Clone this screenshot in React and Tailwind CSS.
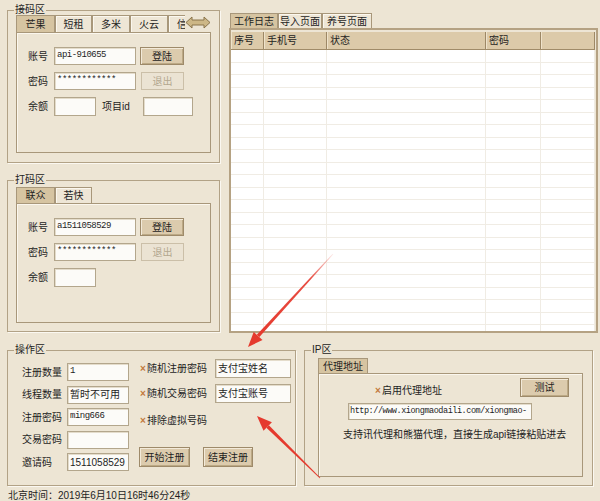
import React from 'react';

const GroupBox = ({ title, className = '', children }) => (
  <fieldset className={`border border-[#b2a286] shadow-[1px_1px_0_#fbf8f1] ${className}`}>
    <legend className="ml-[6px] px-px h-[12px] leading-[12px] text-[10px] text-[#222]">{title}</legend>
    {children}
  </fieldset>
);

const Tab = ({ label, active, className = '' }) => (
  <div
    className={`flex items-center justify-center shrink-0 h-full border border-b-0 border-[#a8977a] whitespace-nowrap ${
      active ? 'bg-[#d6c4a1]' : 'bg-[#eee6d6] shadow-[inset_1px_1px_0_#fbf7ee]'
    } ${className}`}
  >
    {label}
  </div>
);

const TextBox = ({ value = '', mono, className = '' }) => (
  <div
    className={`flex items-center px-[2px] bg-[#fcfbf8] border border-[#b3a68c] shadow-[inset_1px_1px_0_#e4dccb] overflow-hidden whitespace-nowrap ${
      mono ? "font-['Liberation_Mono',monospace] text-[9px] tracking-[-0.5px]" : ''
    } ${className}`}
  >
    {value}
  </div>
);

const Btn = ({ label, disabled, className = '' }) => (
  <button
    type="button"
    className={`flex items-center justify-center border text-[10px] ${
      disabled
        ? 'bg-[#ebe3d3] border-[#cbbfa8] text-[#b3a78f]'
        : 'bg-[#dccbad] border-[#9e8a6a] shadow-[inset_1px_1px_0_#f3ead9,inset_-1px_-1px_0_#bca985]'
    } ${className}`}
  >
    {label}
  </button>
);

const Check = ({ label, className = '' }) => (
  <div className={`flex items-center whitespace-nowrap leading-[12px] ${className}`}>
    <span className="w-[7px] text-[#c27a3c] font-bold">×</span>
    <span>{label}</span>
  </div>
);

const ScrollArrows = () => (
  <svg width="26" height="13" viewBox="0 0 26 13" className="shrink-0 mb-[3px]">
    <path d="M1 6.5 L7 1 L7 4 L19 4 L19 1 L25 6.5 L19 12 L19 9 L7 9 L7 12 Z" fill="#cdb786" stroke="#8a744b" strokeWidth="1" />
  </svg>
);

// 账号 / 密码 / 余额 rows shared by both platform panels
const LoginRows = ({ account, extra }) => (
  <div className="flex flex-col gap-[7px]">
    <div className="flex items-center h-[18px]">
      <span className="w-[26px]">账号</span>
      <TextBox value={account} mono className="w-[82px] h-full" />
      <Btn label="登陆" className="ml-[4px] w-[44px] h-full" />
    </div>
    <div className="flex items-center h-[18px]">
      <span className="w-[26px]">密码</span>
      <TextBox value="************" mono className="w-[82px] h-full" />
      <Btn label="退出" disabled className="ml-[5px] w-[43px] h-full" />
    </div>
    <div className="flex items-center h-[19px]">
      <span className="w-[26px]">余额</span>
      <TextBox className="w-[42px] h-full" />
      {extra && (
        <>
          <span className="ml-[6px] w-[41px]">项目id</span>
          <TextBox className="w-[50px] h-full" />
        </>
      )}
    </div>
  </div>
);

const columns = [
  { label: '序号', w: 'w-[33px]' },
  { label: '手机号', w: 'w-[63px]' },
  { label: '状态', w: 'w-[159px]' },
  { label: '密码', w: 'w-[55px]' },
  { label: '', w: 'flex-1' },
];

const rows = Array.from({ length: 23 }, (_, i) => i);

export default function App() {
  return (
    <div className="relative w-[600px] h-[501px] overflow-hidden bg-[#ede5d4] text-[10px] text-[#1e1e1e] font-['Liberation_Sans','Noto_Sans_CJK_SC',sans-serif]">
      {/* top area */}
      <div className="flex h-[333px] pt-[4px]">
        <div className="ml-[7px] w-[213px] flex flex-col">
          <GroupBox title="接码区" className="h-[159px]">
            <div className="ml-[8px] -mt-px w-[195px]">
              <div className="flex items-end h-[17px]">
                <div className="flex h-full w-[169px] overflow-hidden">
                  <Tab label="芒果" active className="w-[39px]" />
                  <Tab label="短租" className="w-[37px]" />
                  <Tab label="多米" className="w-[38px]" />
                  <Tab label="火云" className="w-[38px]" />
                  <Tab label="信息" className="w-[38px]" />
                </div>
                <ScrollArrows />
              </div>
              <div className="h-[121px] border border-[#a8977a] shadow-[inset_1px_1px_0_#fbf7ee] pt-[14px] pl-[11px]">
                <LoginRows account="api-910655" extra />
              </div>
            </div>
          </GroupBox>

          <GroupBox title="打码区" className="mt-[11px] h-[158px]">
            <div className="ml-[8px] mt-px w-[195px]">
              <div className="flex h-[16px]">
                <Tab label="联众" active className="w-[39px]" />
                <Tab label="若快" className="w-[37px]" />
              </div>
              <div className="h-[120px] border border-[#a8977a] shadow-[inset_1px_1px_0_#fbf7ee] pt-[14px] pl-[11px]">
                <LoginRows account="a1511058529" />
              </div>
            </div>
          </GroupBox>
        </div>

        {/* log tabs */}
        <div className="ml-[9px] mt-[9px] w-[369px] flex flex-col">
          <div className="flex h-[15px] ml-px">
            <Tab label="工作日志" active className="w-[48px]" />
            <Tab label="导入页面" className="w-[44px]" />
            <Tab label="养号页面" className="w-[50px]" />
          </div>
          <div className="h-[305px] border-2 border-[#b5a283] pt-[2px] pr-px flex flex-col overflow-hidden">
            <div className="flex h-[18px] bg-[#dccaa9] border-b border-[#a08b68] shrink-0">
              {columns.map((c) => (
                <div
                  key={c.label || 'blank'}
                  className={`${c.w} h-full flex items-center pl-[3px] border-r border-[#9d8866] shadow-[inset_1px_0_0_#efe3cb]`}
                >
                  {c.label}
                </div>
              ))}
            </div>
            <div className="flex-1 bg-white overflow-hidden">
              {rows.map((r) => (
                <div key={r} className="flex h-[12.5px]">
                  {columns.map((c) => (
                    <div key={c.label || 'blank'} className={`${c.w} h-full border-r border-b border-[#f0ece4]`} />
                  ))}
                </div>
              ))}
            </div>
          </div>
        </div>
      </div>

      {/* bottom area */}
      <div className="flex mt-[11px]">
        <GroupBox title="操作区" className="ml-[7px] w-[289px] h-[142px]">
          <div className="flex">
            <div className="pl-[14px] pt-[7px] flex flex-col gap-[4.5px]">
              {[
                ['注册数量', '1', true],
                ['线程数量', '暂时不可用', false],
                ['注册密码', 'ming666', true],
                ['交易密码', '', false],
                ['邀请码', '1511058529', false],
              ].map(([label, value, mono]) => (
                <div key={label} className="flex items-center h-[18px]">
                  <span className="w-[45px]">{label}</span>
                  <TextBox value={value} mono={mono} className="w-[62px] h-full" />
                </div>
              ))}
            </div>
            <div className="ml-[11px] pt-[3px] flex flex-col">
              <div className="flex items-center h-[19px]">
                <Check label="随机注册密码" className="w-[75px]" />
                <TextBox value="支付宝姓名" className="w-[76px] h-full" />
              </div>
              <div className="flex items-center h-[19px] mt-[6px]">
                <Check label="随机交易密码" className="w-[75px]" />
                <TextBox value="支付宝账号" className="w-[76px] h-full" />
              </div>
              <div className="flex items-center h-[18px] mt-[9px]">
                <Check label="排除虚拟号码" />
              </div>
              <div className="flex h-[20px] mt-[17px] -ml-px">
                <Btn label="开始注册" className="w-[51px] h-full" />
                <Btn label="结束注册" className="ml-[13px] w-[50px] h-full" />
              </div>
            </div>
          </div>
        </GroupBox>

        <GroupBox title="IP区" className="ml-[8px] w-[289px] h-[142px]">
          <div className="ml-[13px] mt-[2px]">
            <div className="flex h-[15px]">
              <Tab label="代理地址" active className="w-[50px]" />
            </div>
            <div className="w-[265px] h-[104px] border border-[#a8977a] shadow-[inset_1px_1px_0_#fbf7ee] pt-[4px]">
              <div className="flex items-start">
                <Check label="启用代理地址" className="ml-[56px] mt-[7px]" />
                <Btn label="测试" className="ml-auto mr-[13px] w-[49px] h-[19px]" />
              </div>
              <div className="ml-[29px] mt-[6px] w-[184px] h-[17px] flex items-center px-px bg-[#fcfbf8] border border-[#b3a68c] shadow-[inset_1px_1px_0_#e4dccb] overflow-hidden whitespace-nowrap font-['Liberation_Mono',monospace] text-[8.5px] tracking-[-0.45px]">
                http://www.xiongmaodaili.com/xiongmao-
              </div>
              <div className="ml-[24px] mt-[9px] leading-[12px] whitespace-nowrap">
                支持讯代理和熊猫代理，直接生成api链接粘贴进去
              </div>
            </div>
          </div>
        </GroupBox>
      </div>

      <div className="ml-[8px] mt-[4px] leading-[12px] text-[10px] whitespace-nowrap">
        北京时间：2019年6月10日16时46分24秒
      </div>

      {/* red annotation arrows */}
      <svg className="absolute inset-0 pointer-events-none" width="600" height="501" viewBox="0 0 600 501">
        <defs>
          <linearGradient id="fadeA" x1="333" y1="254" x2="258" y2="336" gradientUnits="userSpaceOnUse">
            <stop offset="0" stopColor="#e53a2e" stopOpacity="0.1" />
            <stop offset="0.3" stopColor="#e53a2e" stopOpacity="0.9" />
            <stop offset="1" stopColor="#e53a2e" />
          </linearGradient>
        </defs>
        <polygon points="333.3,254.3 259.4,337.1 256.8,334.7 332.7,253.7" fill="url(#fadeA)" />
        <polygon points="248,347 262.5,340 253.7,331.9" fill="#e53a2e" />
        <polygon points="320.3,477.7 268.9,425.2 266.4,427.8 319.7,478.3" fill="#e53a2e" />
        <polygon points="257,416 271.9,422.2 263.5,430.8" fill="#e53a2e" />
      </svg>
    </div>
  );
}
